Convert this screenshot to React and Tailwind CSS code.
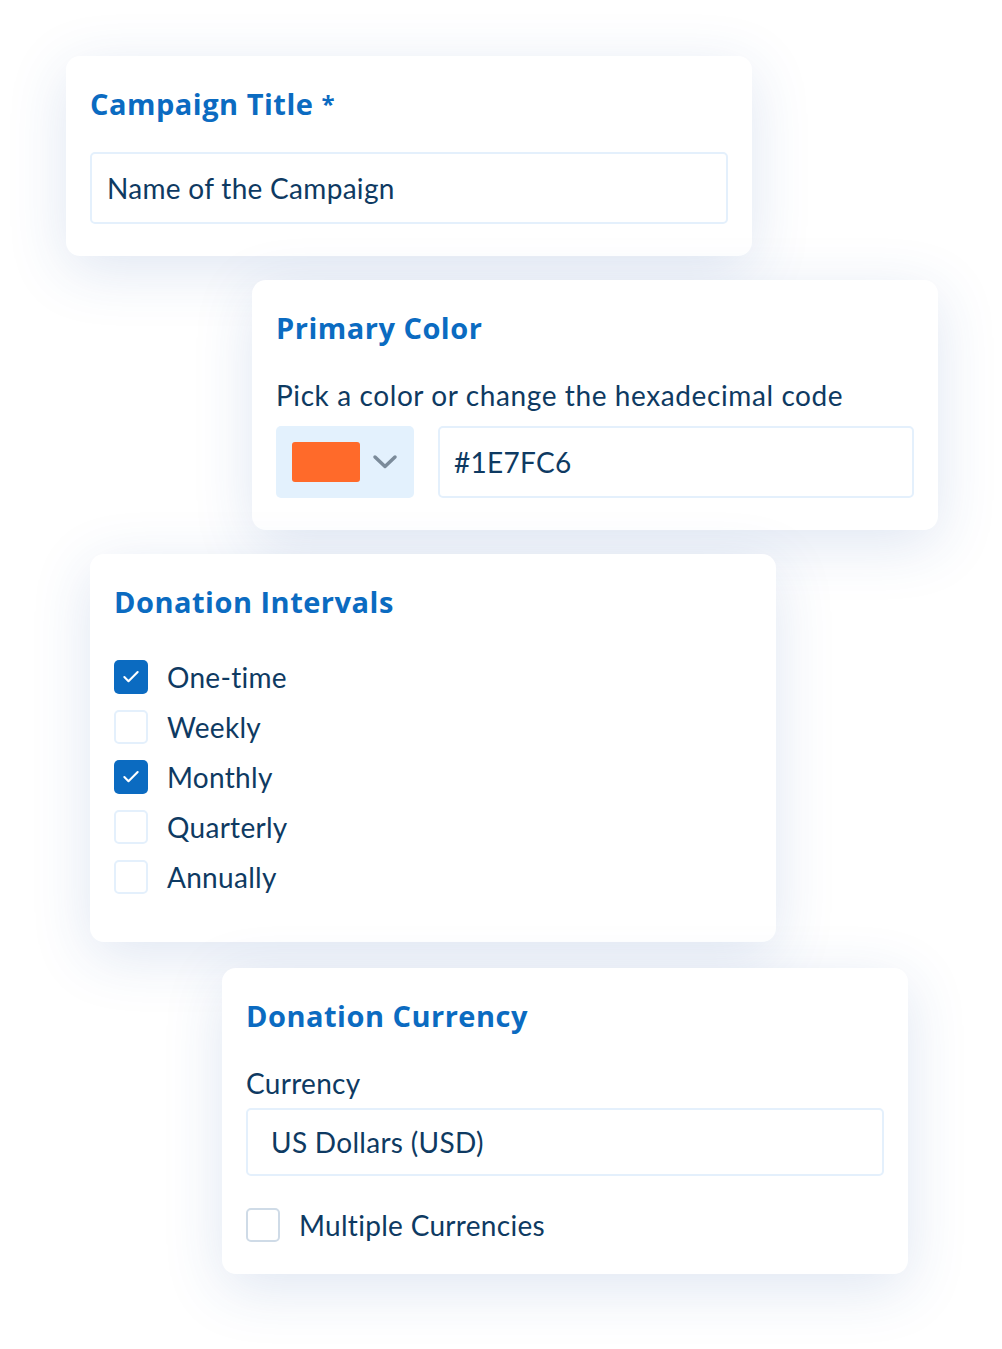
import { Check } from "lucide-react";

const card =
  "bg-white rounded-[14px] w-[686px] shadow-[0_14px_60px_rgba(40,90,170,0.15)]";
const heading =
  "text-[29px] leading-[36px] font-bold tracking-[0.5px] text-[#0b6bc1] font-['Open_Sans',sans-serif]";
const body = "text-[#0e3a62] font-['Lato',sans-serif] text-[28px] tracking-[0.3px]";

function Box({ checked, gray }) {
  if (checked) {
    return (
      <span className="w-[34px] h-[34px] rounded-[5px] bg-[#0b6bc1] flex items-center justify-center shrink-0">
        <Check size={20} strokeWidth={2.5} className="text-white" />
      </span>
    );
  }
  return (
    <span
      className={
        "w-[34px] h-[34px] rounded-[5px] border-2 bg-white shrink-0 " +
        (gray ? "border-[#cfdbe7]" : "border-[#e4f0fc]")
      }
    />
  );
}

function Interval({ label, checked }) {
  return (
    <li className="flex items-center gap-[19px] h-[34px]">
      <Box checked={checked} />
      <span className={body}>{label}</span>
    </li>
  );
}

export default function App() {
  return (
    <div className="bg-white min-h-[1349px] pt-[56px] flex flex-col">
      <section className={card + " ml-[66px] h-[200px] px-[24px] pt-[30px]"}>
        <h2 className={heading}>
          Campaign Title <span className="text-[24px] align-top">*</span>
        </h2>
        <div className="mt-[30px] h-[72px] border-2 border-[#e4f0fc] rounded-[5px] flex items-center px-[15px]">
          <span className={body}>Name of the Campaign</span>
        </div>
      </section>

      <section className={card + " ml-[252px] mt-[24px] h-[250px] px-[24px] pt-[30px]"}>
        <h2 className={heading}>Primary Color</h2>
        <p className={body + " leading-[36px] mt-[31px] tracking-[0.6px]"}>
          Pick a color or change the hexadecimal code
        </p>
        <div className="flex gap-[24px] mt-[13px]">
          <div className="w-[138px] h-[72px] rounded-[5px] bg-[#e3f1fd] flex items-center pl-[16px] gap-[12px]">
            <span className="w-[68px] h-[40px] rounded-[3px] bg-[#ff6a2a]" />
            <svg width="26" height="16" viewBox="0 0 26 16" fill="none">
              <path
                d="M3 3 L13 12.5 L23 3"
                stroke="#7b8b9a"
                strokeWidth="3.5"
                strokeLinecap="round"
                strokeLinejoin="round"
              />
            </svg>
          </div>
          <div className="flex-1 h-[72px] border-2 border-[#e4f0fc] rounded-[5px] flex items-center px-[14px]">
            <span className={body}>#1E7FC6</span>
          </div>
        </div>
      </section>

      <section className={card + " ml-[90px] mt-[24px] h-[388px] px-[24px] pt-[30px]"}>
        <h2 className={heading}>Donation Intervals</h2>
        <ul className="mt-[40px] flex flex-col gap-[16px]">
          <Interval label="One-time" checked />
          <Interval label="Weekly" />
          <Interval label="Monthly" checked />
          <Interval label="Quarterly" />
          <Interval label="Annually" />
        </ul>
      </section>

      <section className={card + " ml-[222px] mt-[26px] h-[306px] px-[24px] pt-[30px]"}>
        <h2 className={heading}>Donation Currency</h2>
        <p className={body + " leading-[36px] mt-[31px]"}>Currency</p>
        <div className="mt-[7px] h-[68px] border-2 border-[#e4f0fc] rounded-[5px] flex items-center px-[23px]">
          <span className={body}>US Dollars (USD)</span>
        </div>
        <div className="flex items-center gap-[19px] mt-[28px]">
          <Box gray />
          <span className={body}>Multiple Currencies</span>
        </div>
      </section>
    </div>
  );
}
